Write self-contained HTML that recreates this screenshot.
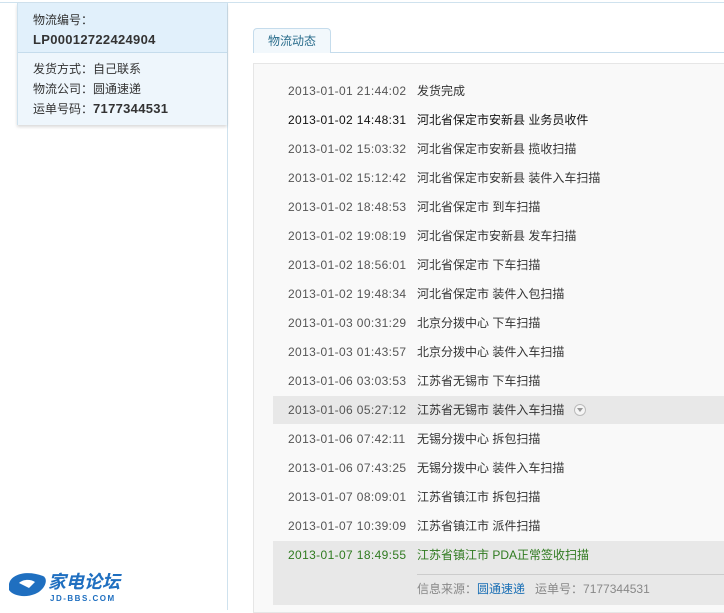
<!DOCTYPE html>
<html><head><meta charset="utf-8"><style>
*{margin:0;padding:0;box-sizing:border-box}
body{width:724px;height:610px;overflow:hidden;background:#fff;font-family:"Liberation Sans","Noto Sans CJK SC",sans-serif;font-size:12px;color:#333;position:relative}
.topline{position:absolute;left:0;top:2px;width:724px;height:1px;background:#cfe2ee}
.vline{position:absolute;left:227px;top:2px;width:1px;height:608px;background:#cfe2ee}
.left{position:absolute;left:17px;top:3px;width:210px;height:122px;border-left:1px solid #cfe2ee;box-shadow:0 2px 3px rgba(0,0,0,.15)}
.l1{height:50px;background:#e1f0fb;border-bottom:1px solid #c5dcec;padding:7px 0 0 15px;line-height:20px}
.l2{background:#eef6fc;height:72px;padding:7px 0 0 15px;line-height:19.5px}
b{font-weight:bold;letter-spacing:0.3px}
.tab{position:absolute;left:253px;top:28px;width:78px;height:25px;border:1px solid #c5dcec;border-bottom:none;border-radius:4px 4px 0 0;background:#f2f8fc;color:#2a6d8c;text-align:center;line-height:24px}
.tabline{position:absolute;left:330px;top:52px;width:394px;height:1px;background:#c5dcec}
.box{position:absolute;left:253px;top:63px;width:480px;height:550px;border:1px solid #e6e6e6;background:#f9f9f9}
.row{position:absolute;left:273px;width:460px;height:29px;line-height:29px}
.t{position:absolute;left:15px;color:#555;letter-spacing:0.37px}
.d{position:absolute;left:144px;color:#333}
.hl{background:#e8e8e8}
.g .t,.g .d{color:#2f7a1f}
.circ{display:inline-block;width:12px;height:12px;border:1px solid #bbb;border-radius:50%;vertical-align:-2px;margin-left:10px;position:relative;background:#f5f5f5}
.circ:after{content:"";position:absolute;left:2px;top:3px;border-left:3px solid transparent;border-right:3px solid transparent;border-top:4px solid #999}
</style></head><body>
<div class="topline"></div>
<div class="vline"></div>
<div class="left">
<div class="l1">物流编号：<br><b style="font-size:13px">LP00012722424904</b></div>
<div class="l2">发货方式：自己联系<br>物流公司：圆通速递<br>运单号码：<b style="font-size:13px">7177344531</b></div>
</div>
<div class="tab">物流动态</div>
<div class="tabline"></div>
<div class="box"></div>
<div class="row" style="top:77px"><span class="t">2013-01-01 21:44:02</span><span class="d">发货完成</span></div>
<div class="row" style="top:106px"><span class="t" style="color:#111">2013-01-02 14:48:31</span><span class="d" style="color:#111">河北省保定市安新县 业务员收件</span></div>
<div class="row" style="top:135px"><span class="t">2013-01-02 15:03:32</span><span class="d">河北省保定市安新县 揽收扫描</span></div>
<div class="row" style="top:164px"><span class="t">2013-01-02 15:12:42</span><span class="d">河北省保定市安新县 装件入车扫描</span></div>
<div class="row" style="top:193px"><span class="t">2013-01-02 18:48:53</span><span class="d">河北省保定市 到车扫描</span></div>
<div class="row" style="top:222px"><span class="t">2013-01-02 19:08:19</span><span class="d">河北省保定市安新县 发车扫描</span></div>
<div class="row" style="top:251px"><span class="t">2013-01-02 18:56:01</span><span class="d">河北省保定市 下车扫描</span></div>
<div class="row" style="top:280px"><span class="t">2013-01-02 19:48:34</span><span class="d">河北省保定市 装件入包扫描</span></div>
<div class="row" style="top:309px"><span class="t">2013-01-03 00:31:29</span><span class="d">北京分拨中心 下车扫描</span></div>
<div class="row" style="top:338px"><span class="t">2013-01-03 01:43:57</span><span class="d">北京分拨中心 装件入车扫描</span></div>
<div class="row" style="top:367px"><span class="t">2013-01-06 03:03:53</span><span class="d">江苏省无锡市 下车扫描</span></div>
<div class="row hl" style="top:396px;height:28px;line-height:29px"><span class="t">2013-01-06 05:27:12</span><span class="d">江苏省无锡市 装件入车扫描<span class="circ"></span></span></div>
<div class="row" style="top:425px"><span class="t">2013-01-06 07:42:11</span><span class="d">无锡分拨中心 拆包扫描</span></div>
<div class="row" style="top:454px"><span class="t">2013-01-06 07:43:25</span><span class="d">无锡分拨中心 装件入车扫描</span></div>
<div class="row" style="top:483px"><span class="t">2013-01-07 08:09:01</span><span class="d">江苏省镇江市 拆包扫描</span></div>
<div class="row" style="top:512px"><span class="t">2013-01-07 10:39:09</span><span class="d">江苏省镇江市 派件扫描</span></div>
<div class="row hl g" style="top:541px;height:64px;line-height:28px"><span class="t">2013-01-07 18:49:55</span><span class="d">江苏省镇江市 PDA正常签收扫描</span>
<div style="position:absolute;left:144px;top:33px;width:320px;height:1px;background:#ccc"></div>
<div style="position:absolute;left:144px;top:35px;line-height:26px;color:#888">信息来源：<span style="color:#1a6fb5">圆通速递</span>&nbsp;&nbsp;&nbsp;运单号：7177344531</div>
</div>
<svg style="position:absolute;left:5px;top:570px" width="45" height="30" viewBox="0 0 45 30"><path d="M4 14 C6 4,22 0,38 6 C44 9,40 20,30 24 C20 28,8 26,4 20 Z" fill="#1f6fc0"/><path d="M14 13 C18 9,26 9,30 12 L24 18 Z" fill="#fff"/></svg>
<div style="position:absolute;left:48px;top:572px;color:#1f6fc0;font-weight:bold;font-size:18px;font-style:italic;line-height:20px">家电论坛</div>
<div style="position:absolute;left:50px;top:594px;color:#1f6fc0;font-weight:bold;font-size:8px;letter-spacing:1.5px">JD-BBS.COM</div>
</body></html>
